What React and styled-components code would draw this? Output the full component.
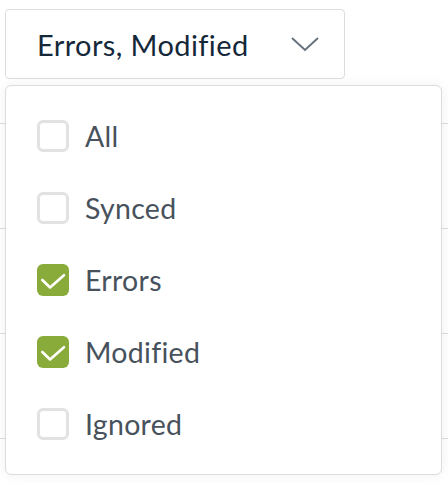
import styled, { createGlobalStyle } from 'styled-components';

const GlobalStyle = createGlobalStyle`
	html, body {
		margin: 0;
		padding: 0;
		background: #ffffff;
	}
	body {
		font-family: Lato, 'Noto Sans', sans-serif;
		-webkit-font-smoothing: antialiased;
	}
`;

const OPTIONS = [
	{ id: 'all', label: 'All', checked: false },
	{ id: 'synced', label: 'Synced', checked: false },
	{ id: 'errors', label: 'Errors', checked: true },
	{ id: 'modified', label: 'Modified', checked: true },
	{ id: 'ignored', label: 'Ignored', checked: false },
];

const Page = styled.div`
	width: 448px;
	height: 484px;
	overflow: hidden;
	position: relative;
`;

const Toolbar = styled.div`
	display: flex;
	align-items: center;
	height: 88px;
	padding-left: 5px;
	box-sizing: border-box;
`;

const FilterWrap = styled.div`
	position: relative;
`;

const FilterButton = styled.button`
	display: flex;
	align-items: center;
	justify-content: space-between;
	width: 340px;
	height: 70px;
	padding: 0 25px 0 31px;
	box-sizing: border-box;
	background: #ffffff;
	border: 1px solid #dcdcdc;
	border-radius: 4px;
	font-family: inherit;
	font-size: 29px;
	letter-spacing: 0.4px;
	color: #15283a;
	cursor: pointer;
`;

const Chevron = styled.svg`
	width: 28px;
	height: 16px;
	stroke: #66727d;
	stroke-width: 2;
	fill: none;
`;

const Table = styled.div`
	display: flex;
	flex-direction: column;
`;

const Row = styled.div`
	height: ${({ $height }) => $height}px;
	border-bottom: 1px solid #dddddd;
`;

const Menu = styled.div`
	position: absolute;
	top: calc(100% + 6px);
	left: 0;
	width: 437px;
	padding: 14px 0;
	box-sizing: border-box;
	background: #ffffff;
	border: 1px solid #dcdcdc;
	border-radius: 6px;
	box-shadow: 0 0 14px rgba(0, 0, 0, 0.06);
	z-index: 2;
`;

const Option = styled.label`
	display: flex;
	align-items: center;
	gap: 16px;
	height: 72px;
	padding-left: 31px;
	font-size: 28.5px;
	letter-spacing: 0.3px;
	color: #47525c;
	cursor: pointer;
`;

const Box = styled.span`
	display: flex;
	align-items: center;
	justify-content: center;
	width: 32px;
	height: 32px;
	box-sizing: border-box;
	border-radius: 6px;
	border: ${({ $checked }) => ($checked ? 'none' : '3px solid #e2e2e2')};
	background: ${({ $checked }) => ($checked ? '#88ab3a' : '#ffffff')};
`;

const Check = styled.svg`
	width: 32px;
	height: 32px;
	fill: none;
	stroke: #ffffff;
	stroke-width: 2;
	stroke-linecap: round;
	stroke-linejoin: round;
`;

const Checkbox = ({ checked }) => (
	<Box $checked={checked}>
		{checked && (
			<Check viewBox="0 0 24 24">
				<polyline points="4 12 9.8 17.6 20.2 8.4" />
			</Check>
		)}
	</Box>
);

export default function App() {
	const selected = OPTIONS.filter((o) => o.checked).map((o) => o.label);

	return (
		<Page>
			<GlobalStyle />
			<Toolbar>
				<FilterWrap>
					<FilterButton>
						<span>{selected.join(', ')}</span>
						<Chevron viewBox="0 0 28 16">
							<polyline points="1 2 14 14 27 2" />
						</Chevron>
					</FilterButton>
					<Menu>
						{OPTIONS.map((o) => (
							<Option key={o.id}>
								<Checkbox checked={o.checked} />
								{o.label}
							</Option>
						))}
					</Menu>
				</FilterWrap>
			</Toolbar>
			<Table>
				<Row $height={35} />
				<Row $height={104} />
				<Row $height={104} />
				<Row $height={104} />
				<Row $height={104} />
			</Table>
		</Page>
	);
}
